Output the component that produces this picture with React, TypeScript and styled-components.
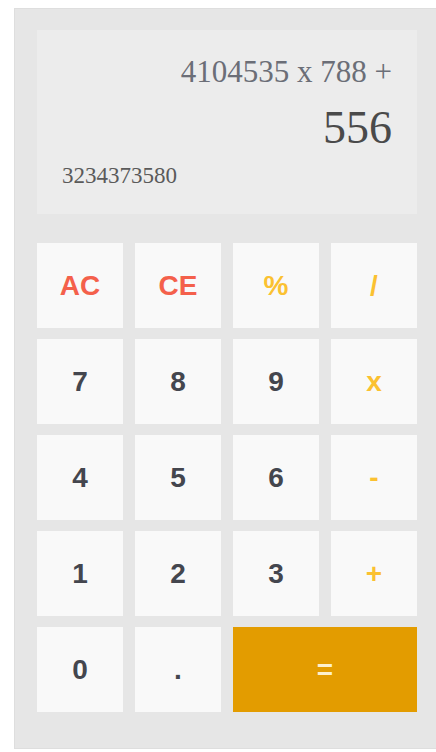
import React from "react";
import styled, { createGlobalStyle } from "styled-components";

const Global = createGlobalStyle`
  html, body { margin: 0; padding: 0; overflow: hidden; background: #ffffff; }
  body { width: 436px; height: 752px; }
`;

const Page = styled.div`
  padding: 8px 0 0 14px;
`;

const Calculator = styled.div`
  box-sizing: border-box;
  width: 426px;
  height: 741px;
  background: #e6e6e6;
  border: 1px solid #dedede;
  padding: 21px 22px 0 22px;
`;

const Display = styled.div`
  box-sizing: border-box;
  width: 380px;
  height: 184px;
  background: #ececec;
  padding: 22px 25px 0 25px;
  display: flex;
  flex-direction: column;
  font-family: "Liberation Serif", "Times New Roman", serif;
`;

const Expression = styled.div`
  text-align: right;
  font-size: 31px;
  line-height: 40px;
  color: #6b6e77;
`;

const Current = styled.div`
  text-align: right;
  font-size: 46px;
  line-height: 50px;
  color: #4a4a4a;
  margin-top: 11px;
`;

const Result = styled.div`
  text-align: left;
  font-size: 23px;
  line-height: 30px;
  color: #5a5a5a;
  margin-top: 8px;
`;

const Keys = styled.div`
  margin-top: 29px;
  display: grid;
  grid-template-columns: repeat(4, 86px);
  grid-auto-rows: 85px;
  column-gap: 12px;
  row-gap: 11px;
`;

type Kind = "clear" | "op" | "num" | "equals";

const Key = styled.button<{ $kind: Kind; $span?: number }>`
  border: none;
  margin: 0;
  padding: 0;
  grid-column: span ${(p) => p.$span ?? 1};
  display: flex;
  align-items: center;
  justify-content: center;
  font-family: "Liberation Sans", Arial, sans-serif;
  font-weight: 700;
  font-size: 28px;
  background: ${(p) => (p.$kind === "equals" ? "#e39c00" : "#f9f9f9")};
  color: ${(p) =>
    p.$kind === "clear"
      ? "#f4604b"
      : p.$kind === "op"
      ? "#fbc131"
      : p.$kind === "equals"
      ? "#fdf0cc"
      : "#44464e"};
`;

const keys: { label: string; kind: Kind; span?: number }[] = [
  { label: "AC", kind: "clear" },
  { label: "CE", kind: "clear" },
  { label: "%", kind: "op" },
  { label: "/", kind: "op" },
  { label: "7", kind: "num" },
  { label: "8", kind: "num" },
  { label: "9", kind: "num" },
  { label: "x", kind: "op" },
  { label: "4", kind: "num" },
  { label: "5", kind: "num" },
  { label: "6", kind: "num" },
  { label: "-", kind: "op" },
  { label: "1", kind: "num" },
  { label: "2", kind: "num" },
  { label: "3", kind: "num" },
  { label: "+", kind: "op" },
  { label: "0", kind: "num" },
  { label: ".", kind: "num" },
  { label: "=", kind: "equals", span: 2 },
];

export default function App() {
  return (
    <>
      <Global />
      <Page>
        <Calculator>
          <Display>
            <Expression>4104535 x 788 +</Expression>
            <Current>556</Current>
            <Result>3234373580</Result>
          </Display>
          <Keys>
            {keys.map((k) => (
              <Key key={k.label} $kind={k.kind} $span={k.span}>
                {k.label}
              </Key>
            ))}
          </Keys>
        </Calculator>
      </Page>
    </>
  );
}
